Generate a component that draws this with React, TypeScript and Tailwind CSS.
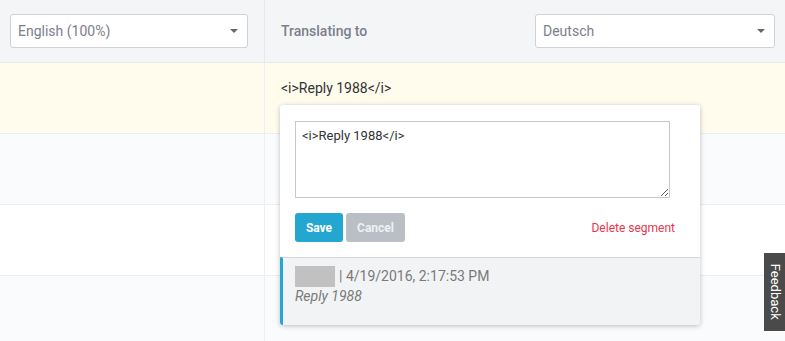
import React from "react";

function Select({ label, className = "" }: { label: string; className?: string }) {
  return (
    <div
      className={`h-[34px] flex items-center justify-between bg-white border border-[#cfd2d6] rounded-[3px] pl-[7px] pr-[9px] ${className}`}
    >
      <span className="text-[14px] text-[#7b8089]">{label}</span>
      <span className="w-0 h-0 border-l-[4px] border-r-[4px] border-t-[4px] border-l-transparent border-r-transparent border-t-[#64676c]" />
    </div>
  );
}

const rows = [
  { bg: "bg-[#fffcee]", text: "<i>Reply 1988</i>" },
  { bg: "bg-[#fafbfd]" },
  { bg: "bg-white" },
  { bg: "bg-[#fafbfd]" },
];

export default function App() {
  return (
    <div
      className="relative w-[785px] h-[341px] overflow-hidden bg-white"
      style={{ fontFamily: "Roboto, 'Liberation Sans', sans-serif" }}
    >
      {/* header */}
      <div className="flex h-[63px] bg-[#f4f5f7] border-b border-[#e6e8eb]">
        <div className="w-[265px] border-r border-[#e6e8eb] flex items-center pl-[10px] pr-[16px]">
          <Select label="English (100%)" className="w-[239px]" />
        </div>
        <div className="flex-1 flex items-center justify-between pl-[16px] pr-[10px]">
          <span className="text-[14px] font-medium text-[#7b8089]">Translating to</span>
          <Select label="Deutsch" className="w-[240px]" />
        </div>
      </div>

      {/* rows */}
      {rows.map((r, i) => (
        <div key={i} className={`flex h-[71px] border-b border-[#eceef1] ${r.bg}`}>
          <div className="w-[265px] border-r border-[#eceef1]" />
          <div className="flex-1 pl-[16px] pt-[13px]">
            {r.text && <span className="text-[14px] text-[#333]">{r.text}</span>}
          </div>
        </div>
      ))}

      {/* editor popover */}
      <div className="absolute left-[280px] top-[105px] w-[420px] bg-white rounded-[3px] shadow-[0_1px_5px_rgba(0,0,0,0.25)] overflow-hidden">
        <div className="px-[15px] pt-[16px] pb-[15px]">
          <textarea
            className="block w-[375px] h-[77px] border border-[#c8c8c8] px-[6px] py-[4px] text-[13px] text-[#333] outline-none resize-y"
            defaultValue="<i>Reply 1988</i>"
          />
          <div className="flex items-center mt-[15px]">
            <button className="h-[29px] w-[48px] rounded-[3px] bg-[#23a6d0] text-white text-[12px] font-bold">
              Save
            </button>
            <button className="h-[29px] w-[59px] ml-[3px] rounded-[3px] bg-[#b9bfc5] text-[#eef0f2] text-[12px] font-bold">
              Cancel
            </button>
            <span className="ml-auto mr-[10px] text-[12px] text-[#e8364c]">Delete segment</span>
          </div>
        </div>
        <div className="h-[68px] bg-[#f2f3f5] border-t border-[#d5d7da] border-l-[3px] border-l-[#23a6d0] pl-[12px] pt-[8px]">
          <div className="flex items-center h-[21px]">
            <span className="w-[40px] h-[21px] bg-[#c1c1c1]" />
            <span className="text-[14px] text-[#7a7a7a] ml-[4px]">| 4/19/2016, 2:17:53 PM</span>
          </div>
          <div className="text-[14px] italic text-[#7a7a7a] leading-[18px]">Reply 1988</div>
        </div>
      </div>

      {/* feedback tab */}
      <div className="absolute right-0 top-[253px] w-[21px] h-[78px] bg-[#4a4a4a] flex items-center justify-center">
        <span className="text-white text-[13px] rotate-90 whitespace-nowrap">Feedback</span>
      </div>
    </div>
  );
}
